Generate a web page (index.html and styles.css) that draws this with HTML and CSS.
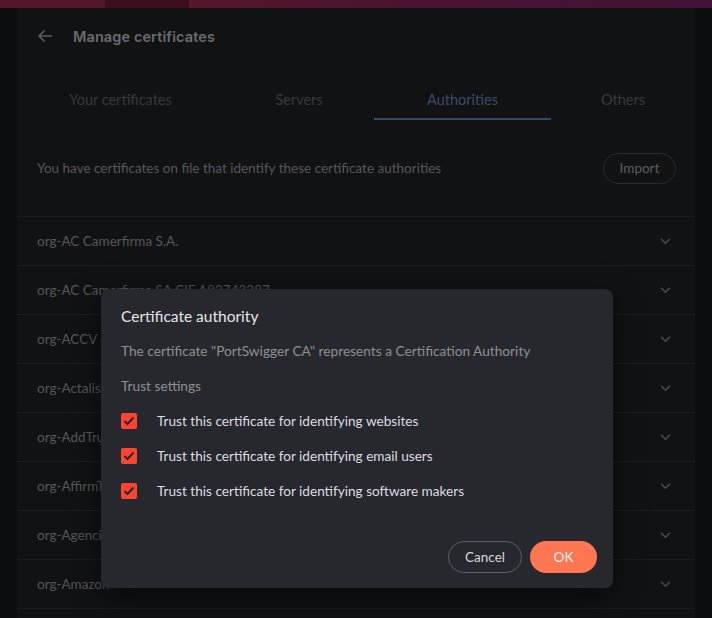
FILE: index.html
```html
<!DOCTYPE html>
<html lang="en">
<head>
<meta charset="utf-8">
<title>Manage certificates</title>
<link rel="stylesheet" href="styles.css">
</head>
<body>
<div class="topbar">
  <div class="seg seg-a"></div>
  <div class="seg seg-b"></div>
  <div class="seg seg-c"></div>
</div>
<div class="page">
  <div class="gutter"></div>
  <main class="panel">
    <header class="header">
      <svg class="back" width="14" height="12" viewBox="0 0 14 12"><path d="M13.5 6H1M6 1L1 6l5 5" fill="none" stroke="#5c5d60" stroke-width="1.6" stroke-linecap="round" stroke-linejoin="round"/></svg>
      <h1 class="title">Manage certificates</h1>
    </header>
    <nav class="tabs">
      <div class="tab">Your certificates</div>
      <div class="tab">Servers</div>
      <div class="tab active">Authorities</div>
      <div class="tab">Others</div>
    </nav>
    <div class="intro">
      <p class="intro-text">You have certificates on file that identify these certificate authorities</p>
      <button class="import">Import</button>
    </div>
    <ul class="list">
      <li class="row"><span>org-AC Camerfirma S.A.</span><svg class="chev" width="11" height="6" viewBox="0 0 11 6"><path d="M1 0.8l4.5 4.4L10 0.8" fill="none" stroke="#4a4b4e" stroke-width="1.6"/></svg></li>
      <li class="row"><span>org-AC Camerfirma SA CIF A82743287</span><svg class="chev" width="11" height="6" viewBox="0 0 11 6"><path d="M1 0.8l4.5 4.4L10 0.8" fill="none" stroke="#4a4b4e" stroke-width="1.6"/></svg></li>
      <li class="row"><span>org-ACCV</span><svg class="chev" width="11" height="6" viewBox="0 0 11 6"><path d="M1 0.8l4.5 4.4L10 0.8" fill="none" stroke="#4a4b4e" stroke-width="1.6"/></svg></li>
      <li class="row"><span>org-Actalis S.p.A./03358520967</span><svg class="chev" width="11" height="6" viewBox="0 0 11 6"><path d="M1 0.8l4.5 4.4L10 0.8" fill="none" stroke="#4a4b4e" stroke-width="1.6"/></svg></li>
      <li class="row"><span>org-AddTrust AB</span><svg class="chev" width="11" height="6" viewBox="0 0 11 6"><path d="M1 0.8l4.5 4.4L10 0.8" fill="none" stroke="#4a4b4e" stroke-width="1.6"/></svg></li>
      <li class="row"><span>org-AffirmTrust</span><svg class="chev" width="11" height="6" viewBox="0 0 11 6"><path d="M1 0.8l4.5 4.4L10 0.8" fill="none" stroke="#4a4b4e" stroke-width="1.6"/></svg></li>
      <li class="row"><span>org-Agencia Catalana de Certificacio (NIF Q-0801176-I)</span><svg class="chev" width="11" height="6" viewBox="0 0 11 6"><path d="M1 0.8l4.5 4.4L10 0.8" fill="none" stroke="#4a4b4e" stroke-width="1.6"/></svg></li>
      <li class="row"><span>org-Amazon</span><svg class="chev" width="11" height="6" viewBox="0 0 11 6"><path d="M1 0.8l4.5 4.4L10 0.8" fill="none" stroke="#4a4b4e" stroke-width="1.6"/></svg></li>
    </ul>
  </main>
  <div class="gutter"></div>
</div>

<div class="dialog" role="dialog">
  <h2 class="dlg-title">Certificate authority</h2>
  <p class="dlg-desc">The certificate "PortSwigger CA" represents a Certification Authority</p>
  <p class="dlg-desc">Trust settings</p>
  <div class="checks">
    <label class="check"><span class="box"><svg width="12" height="10" viewBox="0 0 12 10"><path d="M1.5 5l3 3 6-6.5" fill="none" stroke="#26272b" stroke-width="2"/></svg></span>Trust this certificate for identifying websites</label>
    <label class="check"><span class="box"><svg width="12" height="10" viewBox="0 0 12 10"><path d="M1.5 5l3 3 6-6.5" fill="none" stroke="#26272b" stroke-width="2"/></svg></span>Trust this certificate for identifying email users</label>
    <label class="check"><span class="box"><svg width="12" height="10" viewBox="0 0 12 10"><path d="M1.5 5l3 3 6-6.5" fill="none" stroke="#26272b" stroke-width="2"/></svg></span>Trust this certificate for identifying software makers</label>
  </div>
  <div class="actions">
    <button class="btn cancel">Cancel</button>
    <button class="btn ok">OK</button>
  </div>
</div>
</body>
</html>
```

FILE: styles.css
```css
* { box-sizing: border-box; }
html, body { margin: 0; padding: 0; height: 100%; overflow: hidden; }
body {
  background: #0b0c0e;
  font-family: "Lato", "Noto Sans", sans-serif;
  color: #5c5d60;
}

.topbar { display: flex; height: 8px; }
.seg-a { width: 105px; background: #561627; }
.seg-b { width: 84px; background: #3d0f1c; }
.seg-c { flex: 1; background: linear-gradient(90deg, #55152b 0%, #4a1331 50%, #421239 100%); }

.page { display: flex; height: 610px; overflow: hidden; }
.gutter { width: 17px; background: #0b0c0e; }
.panel { flex: 1; background: #111214; display: flex; flex-direction: column; }
.panel > * { flex-shrink: 0; }

.header { height: 56px; display: flex; align-items: center; padding-left: 21px; }
.back { display: block; margin-right: 21px; }
.title {
  margin: 0;
  font-family: "Inter", "Noto Sans", sans-serif;
  font-weight: 600;
  font-size: 14.5px;
  color: #6a6b6e;
  letter-spacing: 0.1px;
}

.tabs {
  margin-top: 16px;
  height: 40px;
  display: grid;
  grid-template-columns: 207px 150px 177px 144px;
}
.tab {
  display: flex; align-items: center; justify-content: center;
  font-size: 14.5px;
  color: #393a3d;
  padding-bottom: 2px;
}
.tab.active { color: #3e4a66; border-bottom: 2px solid #3b4763; padding-bottom: 0; }

.intro {
  height: 96px;
  display: flex; align-items: center; justify-content: space-between;
  padding: 0 19px 0 20px;
}
.intro-text { margin: 0; font-size: 13.5px; color: #56575a; }
.import {
  height: 31px; width: 73px;
  border-radius: 16px;
  background: transparent;
  border: 1px solid #2b2c30;
  color: #5d5e61;
  font-family: inherit;
  font-size: 13.5px;
  padding: 0;
}

.list { list-style: none; margin: 0; padding: 0; border-bottom: 1px solid #1d1e21; }
.row {
  height: 49px;
  border-top: 1px solid #1d1e21;
  display: flex; align-items: center; justify-content: space-between;
  padding: 0 24px 0 20px;
  font-size: 13.5px;
  color: #56575a;
}
.chev { display: block; }

.dialog {
  position: absolute;
  left: 101px; top: 289px;
  width: 512px; height: 299px;
  background: #27282d;
  border-radius: 8px;
  box-shadow: 0 8px 30px rgba(0,0,0,0.55);
  padding: 18px 16px 15px 20px;
  display: flex; flex-direction: column;
}
.dlg-title { margin: 0; font-size: 15.5px; font-weight: 400; color: #e6e6e8; line-height: 18px; }
.dlg-desc { margin: 17px 0 0; font-size: 13.7px; color: #8e8f93; line-height: 18px; }
.checks { display: flex; flex-direction: column; gap: 19px; margin-top: 18px; }
.check { display: flex; align-items: center; font-size: 13.6px; color: #dddde0; line-height: 16px; }
.box {
  width: 16px; height: 16px; border-radius: 2px;
  background: #fd4433;
  display: flex; align-items: center; justify-content: center;
  margin-right: 20px;
}
.box svg { display: block; }
.actions { margin-top: auto; display: flex; justify-content: flex-end; gap: 8px; }
.btn {
  height: 32px; border-radius: 16px;
  font-family: inherit; font-size: 13.5px;
  padding: 0;
}
.cancel { width: 74px; background: transparent; border: 1px solid #5a5c70; color: #d6d6d8; }
.ok { width: 67px; background: #ff7653; border: none; color: #fff5f0; }
```
